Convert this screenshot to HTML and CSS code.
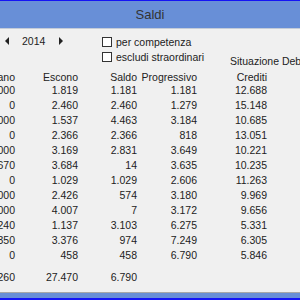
FILE: index.html
```html
<!DOCTYPE html>
<html lang="it">
    <head>
        <meta charset="UTF-8">
        <title>Saldi</title>
        <link rel="stylesheet" href="styles.css">
    </head>
    <body>
        <div class="window">
            <div class="title-bar">
                <span>Saldi</span>
            </div>
            <div class="main">
                <div class="controls">
                    <div class="year-nav">
                        <span class="arrow arrow-left"></span>
                        <span class="year">2014</span>
                        <span class="arrow arrow-right"></span>
                    </div>
                    <div class="options">
                        <label class="option"><span class="box"></span>per competenza</label>
                        <label class="option"><span class="box"></span>escludi straordinari</label>
                    </div>
                    <div class="situazione">Situazione Debiti</div>
                </div>
                <div class="table">
                    <div class="cols head">
                        <span>Entrano</span><span>Escono</span><span>Saldo</span><span>Progressivo</span><span>Crediti</span>
                    </div>
                    <div class="cols body">
                        <span>3.000</span><span>1.819</span><span>1.181</span><span>1.181</span><span>12.688</span>
                        <span>0</span><span>2.460</span><span>2.460</span><span>1.279</span><span>15.148</span>
                        <span>6.000</span><span>1.537</span><span>4.463</span><span>3.184</span><span>10.685</span>
                        <span>0</span><span>2.366</span><span>2.366</span><span>818</span><span>13.051</span>
                        <span>6.000</span><span>3.169</span><span>2.831</span><span>3.649</span><span>10.221</span>
                        <span>3.670</span><span>3.684</span><span>14</span><span>3.635</span><span>10.235</span>
                        <span>0</span><span>1.029</span><span>1.029</span><span>2.606</span><span>11.263</span>
                        <span>3.000</span><span>2.426</span><span>574</span><span>3.180</span><span>9.969</span>
                        <span>4.000</span><span>4.007</span><span>7</span><span>3.172</span><span>9.656</span>
                        <span>4.240</span><span>1.137</span><span>3.103</span><span>6.275</span><span>5.331</span>
                        <span>4.350</span><span>3.376</span><span>974</span><span>7.249</span><span>6.305</span>
                        <span>0</span><span>458</span><span>458</span><span>6.790</span><span>5.846</span>
                    </div>
                    <div class="cols total">
                        <span>34.260</span><span>27.470</span><span>6.790</span><span></span><span></span>
                    </div>
                </div>
            </div>
            <div class="status-bar"></div>
        </div>
    </body>
</html>
```

FILE: styles.css
```css
body {
    margin: 0;
    padding: 0;
    width: 300px;
    height: 300px;
    overflow: hidden;
    background-color: #f0f0f0;
    font-family: "Liberation Sans", Arial, sans-serif;
    font-size: 10.5px;
    color: #222;
}

.window {
    display: flex;
    flex-direction: column;
    height: 300px;
}

.title-bar {
    height: 27px;
    border-top: 1px solid #1414f5;
    border-bottom: 1px solid #c4ccd8;
    background-color: #688fd7;
    display: flex;
    justify-content: center;
    align-items: center;
    font-size: 13px;
    color: #333;
}

.main {
    flex: 1;
    overflow: hidden;
}

.controls {
    display: flex;
    height: 39px;
}

.year-nav {
    display: flex;
    flex-shrink: 0;
    align-items: center;
    height: 13px;
    margin-top: 5px;
    padding-left: 5px;
    width: 97px;
}

.arrow {
    width: 0;
    height: 0;
    border-top: 4px solid transparent;
    border-bottom: 4px solid transparent;
}

.arrow-left {
    border-right: 4px solid #222;
}

.arrow-right {
    border-left: 4px solid #222;
}

.year {
    margin: 0 14px 0 13px;
}

.options {
    display: flex;
    flex-direction: column;
    flex-shrink: 0;
    gap: 2px;
    padding-top: 6px;
    width: 128px;
}

.option {
    display: flex;
    align-items: center;
    height: 13px;
    white-space: nowrap;
}

.box {
    flex-shrink: 0;
    width: 8px;
    height: 8px;
    border: 1px solid #333;
    background-color: #fff;
    margin-right: 4px;
}

.situazione {
    flex-shrink: 0;
    align-self: flex-end;
    line-height: 14px;
    white-space: nowrap;
}

.table {
    margin-top: 3px;
    margin-left: -45px;
}

.cols {
    display: grid;
    grid-template-columns: 60px 63px 59px 60px 70px;
    align-items: center;
}

.cols span {
    text-align: right;
    white-space: nowrap;
}

.head {
    grid-auto-rows: 11px;
}

.body {
    grid-auto-rows: 15px;
}

.total {
    grid-auto-rows: 15px;
    margin-top: 7px;
}

.status-bar {
    height: 5px;
    border-top: 1px solid #a8a8a8;
    border-bottom: 2px solid #1414f5;
    background-color: #688fd7;
}
```
